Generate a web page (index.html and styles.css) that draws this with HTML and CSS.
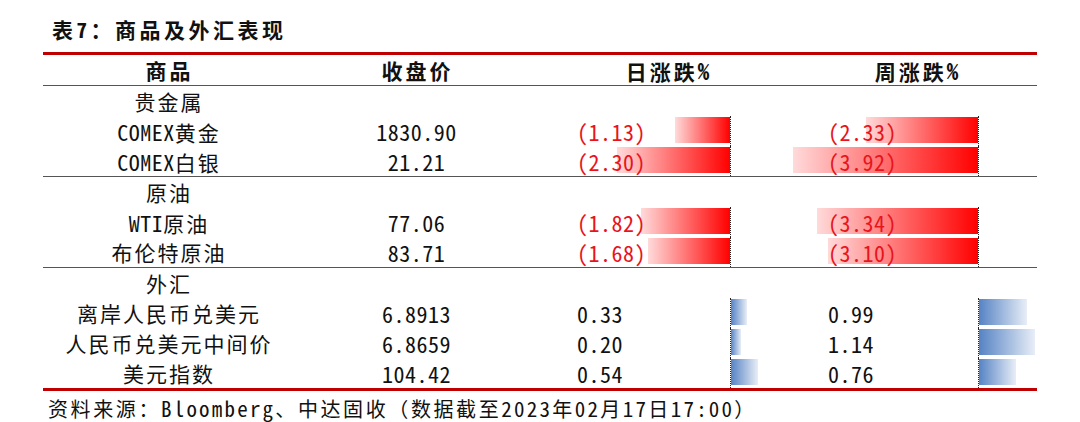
FILE: index.html
```html
<!DOCTYPE html>
<html lang="zh-CN">
<head>
<meta charset="utf-8">
<title>表7：商品及外汇表现</title>
<link rel="stylesheet" href="styles.css">
</head>
<body>
<div class="page">
  <h1 class="title">表7：商品及外汇表现</h1>
  <div class="tbl">
    <div class="row head">
      <div class="c ctr">商品</div>
      <div class="c ctr">收盘价</div>
      <div class="c ctr">日涨跌<span class="pct">%</span></div>
      <div class="c ctr">周涨跌<span class="pct">%</span></div>
    </div>

    <div class="sec">
      <div class="row"><div class="c ctr">贵金属</div></div>
      <div class="row">
        <div class="c ctr"><span class="lat">COMEX</span>黄金</div>
        <div class="c ctr num">1830.90</div>
        <div class="c bc day"><div class="bars"><div class="neg"><i class="bar red" style="width:55px"></i></div><div class="pos"></div></div><span class="val down">(1.13)</span></div>
        <div class="c bc wk"><div class="bars"><div class="neg"><i class="bar red" style="width:112px"></i></div><div class="pos"></div></div><span class="val down">(2.33)</span></div>
      </div>
      <div class="row">
        <div class="c ctr"><span class="lat">COMEX</span>白银</div>
        <div class="c ctr num">21.21</div>
        <div class="c bc day"><div class="bars"><div class="neg"><i class="bar red" style="width:113px"></i></div><div class="pos"></div></div><span class="val down">(2.30)</span></div>
        <div class="c bc wk"><div class="bars"><div class="neg"><i class="bar red" style="width:189px"></i></div><div class="pos"></div></div><span class="val down">(3.92)</span></div>
      </div>
    </div>

    <div class="sec">
      <div class="row"><div class="c ctr">原油</div></div>
      <div class="row">
        <div class="c ctr"><span class="lat">WTI</span>原油</div>
        <div class="c ctr num">77.06</div>
        <div class="c bc day"><div class="bars"><div class="neg"><i class="bar red" style="width:89px"></i></div><div class="pos"></div></div><span class="val down">(1.82)</span></div>
        <div class="c bc wk"><div class="bars"><div class="neg"><i class="bar red" style="width:161px"></i></div><div class="pos"></div></div><span class="val down">(3.34)</span></div>
      </div>
      <div class="row">
        <div class="c ctr">布伦特原油</div>
        <div class="c ctr num">83.71</div>
        <div class="c bc day"><div class="bars"><div class="neg"><i class="bar red" style="width:82px"></i></div><div class="pos"></div></div><span class="val down">(1.68)</span></div>
        <div class="c bc wk"><div class="bars"><div class="neg"><i class="bar red" style="width:150px"></i></div><div class="pos"></div></div><span class="val down">(3.10)</span></div>
      </div>
    </div>

    <div class="sec last">
      <div class="row"><div class="c ctr">外汇</div></div>
      <div class="row">
        <div class="c ctr">离岸人民币兑美元</div>
        <div class="c ctr num">6.8913</div>
        <div class="c bc day"><div class="bars"><div class="neg"></div><div class="pos"><i class="bar blue" style="width:16px"></i></div></div><span class="val">0.33</span></div>
        <div class="c bc wk"><div class="bars"><div class="neg"></div><div class="pos"><i class="bar blue" style="width:48px"></i></div></div><span class="val">0.99</span></div>
      </div>
      <div class="row">
        <div class="c ctr">人民币兑美元中间价</div>
        <div class="c ctr num">6.8659</div>
        <div class="c bc day"><div class="bars"><div class="neg"></div><div class="pos"><i class="bar blue" style="width:10px"></i></div></div><span class="val">0.20</span></div>
        <div class="c bc wk"><div class="bars"><div class="neg"></div><div class="pos"><i class="bar blue" style="width:56px"></i></div></div><span class="val">1.14</span></div>
      </div>
      <div class="row">
        <div class="c ctr">美元指数</div>
        <div class="c ctr num">104.42</div>
        <div class="c bc day"><div class="bars"><div class="neg"></div><div class="pos"><i class="bar blue" style="width:27px"></i></div></div><span class="val">0.54</span></div>
        <div class="c bc wk"><div class="bars"><div class="neg"></div><div class="pos"><i class="bar blue" style="width:37px"></i></div></div><span class="val">0.76</span></div>
      </div>
    </div>
  </div>
  <p class="src">资料来源：<span class="lat">Bloomberg</span>、中达固收（数据截至<span class="lat">2023</span>年<span class="lat">02</span>月<span class="lat">17</span>日<span class="lat">17:00</span>）</p>
</div>
</body>
</html>
```

FILE: styles.css
```css
* { box-sizing: border-box; }
html, body { margin: 0; background: #fff; }
body {
  font-family: "Noto Sans Mono CJK SC", "Noto Sans CJK SC", "DejaVu Sans Mono", monospace;
  color: #111;
}
.page {
  width: 1080px;
  height: 422px;
  padding: 14px 43px 0 43px;
  overflow: hidden;
}
.title {
  margin: 0 0 8px 9px;
  font-size: 21px;
  line-height: 30px;
  font-weight: 700;
  letter-spacing: 3.5px;
}
.tbl {
  width: 994px;
  border-top: 3px solid #c00000;
}
.row {
  display: grid;
  grid-template-columns: 250px 246px 254px 244px;
  height: 30px;
  font-size: 21px;
  letter-spacing: 2px;
}
.head {
  font-weight: 700;
  letter-spacing: 3px;
  border-bottom: 1px solid #555;
  height: 31px;
}
.head .c { padding-left: 3px; }
.pct { font-size: 23px; letter-spacing: 0; }
.sec { border-bottom: 1px solid #555; }
.sec.last { border-bottom: 3px solid #c00000; }
.c {
  line-height: 30px;
  white-space: nowrap;
}
.ctr { text-align: center; padding-left: 2px; }
.lat { font-size: 22px; letter-spacing: 0.5px; }
.num { font-size: 22px; letter-spacing: 0.5px; padding-left: 1px; }
.bc {
  display: grid;
  grid-template-columns: 1fr;
}
.bc > * { grid-area: 1 / 1; }
.bars {
  display: grid;
  height: 30px;
}
.day .bars { grid-template-columns: 192px 1fr; }
.wk .bars { grid-template-columns: 186px 1fr; }
.neg {
  display: flex;
  justify-content: flex-end;
  border-right: 1px dotted #222;
}
.pos {
  display: flex;
  justify-content: flex-start;
}
.bar {
  display: block;
  height: 26px;
  margin-top: 1px;
}
.red { background: linear-gradient(to right, #ffdada, #ff0000); }
.blue { background: linear-gradient(to right, #5683c4, #e8eef7); }
.val {
  font-size: 22px;
  letter-spacing: 0.5px;
  position: relative;
}
.day .val { padding-left: 38px; }
.wk .val { padding-left: 35px; }
.down { color: #e8141c; }
.src {
  margin: 0;
  padding: 4px 0 0 5px;
  font-size: 20px;
  line-height: 26px;
  letter-spacing: 2.6px;
}
.src .lat { font-size: 21px; letter-spacing: 2.2px; }
```
